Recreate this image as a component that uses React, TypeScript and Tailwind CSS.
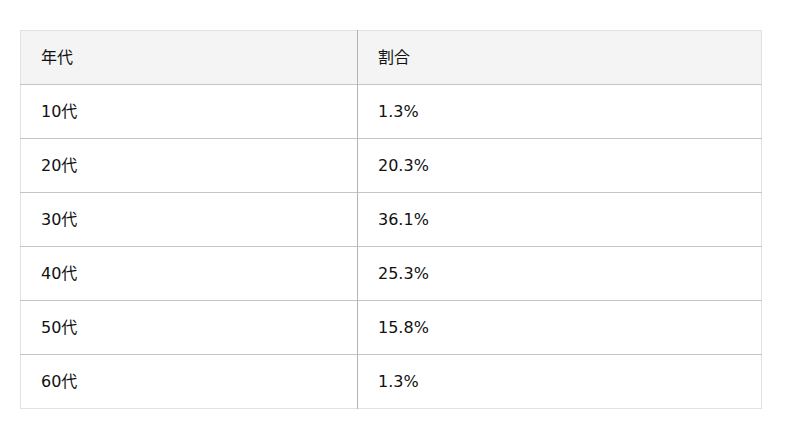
const rows = [
  ["10代", "1.3%"],
  ["20代", "20.3%"],
  ["30代", "36.1%"],
  ["40代", "25.3%"],
  ["50代", "15.8%"],
  ["60代", "1.3%"],
];

export default function App() {
  return (
    <div className="bg-white w-[800px] h-[439px] pt-[30px] px-[20px] font-['DejaVu_Sans','Noto_Sans_CJK_JP',sans-serif] text-[16px] text-[#111]">
      <table className="w-[742px] border-collapse border border-[#e2e2e2]">
        <thead>
          <tr className="bg-[#f4f4f4] h-[54px] border-b border-[#c4c4c4]">
            <th className="w-[337px] text-left font-normal pl-[20px] pt-[1px] border-r border-[#b4b4b4]">年代</th>
            <th className="text-left font-normal pl-[20px] pt-[1px]">割合</th>
          </tr>
        </thead>
        <tbody>
          {rows.map(([age, rate], i) => (
            <tr
              key={age}
              className={i < rows.length - 1 ? "h-[54px] border-b border-[#c4c4c4]" : "h-[54px]"}
            >
              <td className="pl-[20px] pt-[1px] border-r border-[#b4b4b4]">{age}</td>
              <td className="pl-[20px] pt-[1px]">{rate}</td>
            </tr>
          ))}
        </tbody>
      </table>
    </div>
  );
}
